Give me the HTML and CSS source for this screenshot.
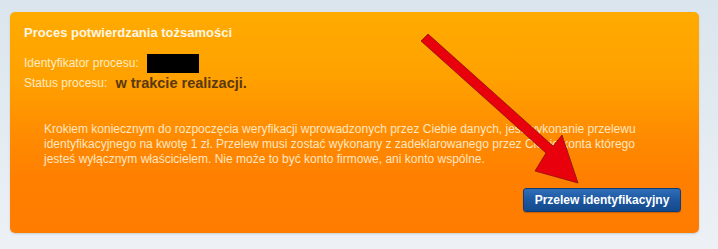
FILE: index.html
```html
<!DOCTYPE html>
<html lang="pl">
<head>
<meta charset="utf-8">
<link rel="stylesheet" href="styles.css">
</head>
<body>
<div class="page">
  <div class="card">
    <h1 class="title">Proces potwierdzania tożsamości</h1>
    <div class="meta">
      <div class="row">Identyfikator procesu: <span class="redact"></span></div>
      <div class="row">Status procesu: <strong class="status">w trakcie realizacji.</strong></div>
    </div>
    <p class="info">Krokiem koniecznym do rozpoczęcia weryfikacji wprowadzonych przez Ciebie danych, jest wykonanie przelewu identyfikacyjnego na kwotę 1 zł. Przelew musi zostać wykonany z zadeklarowanego przez Ciebie konta którego jesteś wyłącznym właścicielem. Nie może to być konto firmowe, ani konto wspólne.</p>
    <div class="actions">
      <button class="btn">Przelew identyfikacyjny</button>
    </div>
    <svg class="arrow" width="718" height="249" viewBox="0 0 718 249">
      <polygon points="421,41 428,34 553,146 562,135 578,183 535,171 546,153" fill="#e8000c" stroke="#8a1010" stroke-width="0.8"/>
    </svg>
  </div>
</div>
</body>
</html>
```

FILE: styles.css
```css
html, body {
  margin: 0;
  padding: 0;
}
body {
  width: 718px;
  height: 249px;
  background: linear-gradient(#dbe5ed, #e6edf3 70%, #edf1f5);
  font-family: "Liberation Sans", Arial, sans-serif;
  overflow: hidden;
}
.page {
  padding: 12px 19px 0 10px;
}
.card {
  position: relative;
  box-sizing: border-box;
  width: 689px;
  height: 221px;
  border-radius: 5px;
  background: linear-gradient(#ffab00 0%, #ffa100 30%, #ff8c00 55%, #ff7f00 75%, #ff7c00 100%);
  box-shadow: 0 1px 2px rgba(120, 140, 160, 0.35);
  padding: 13px 18px 21px 14px;
  display: flex;
  flex-direction: column;
}
.title {
  margin: 0;
  font-size: 13px;
  line-height: 16px;
  font-weight: bold;
  color: #fff6e4;
}
.meta {
  margin-top: 12px;
  display: flex;
  flex-direction: column;
}
.row {
  font-size: 12px;
  line-height: 20px;
  color: #ffebc4;
  display: flex;
  align-items: center;
  gap: 4px;
}
.redact {
  display: inline-block;
  width: 52px;
  height: 19px;
  background: #000;
  margin-left: 4px;
}
.status {
  font-size: 14.5px;
  color: #5a3810;
  margin-left: 4px;
}
.info {
  margin: 29px 0 0 20px;
  width: 600px;
  font-size: 12px;
  line-height: 15px;
  color: #ffe6c2;
}
.actions {
  margin-top: auto;
  display: flex;
  justify-content: flex-end;
}
.btn {
  width: 158px;
  height: 24px;
  border: 1px solid #0f3c74;
  border-radius: 3px;
  background: linear-gradient(#2f6fb8, #1d57a0 50%, #144a8c);
  color: #ffffff;
  font-family: "Liberation Sans", Arial, sans-serif;
  font-weight: bold;
  font-size: 12px;
  padding: 0;
  box-shadow: 0 1px 1px rgba(120, 50, 0, 0.4);
}
.arrow {
  position: absolute;
  left: -10px;
  top: -12px;
  pointer-events: none;
}
```
